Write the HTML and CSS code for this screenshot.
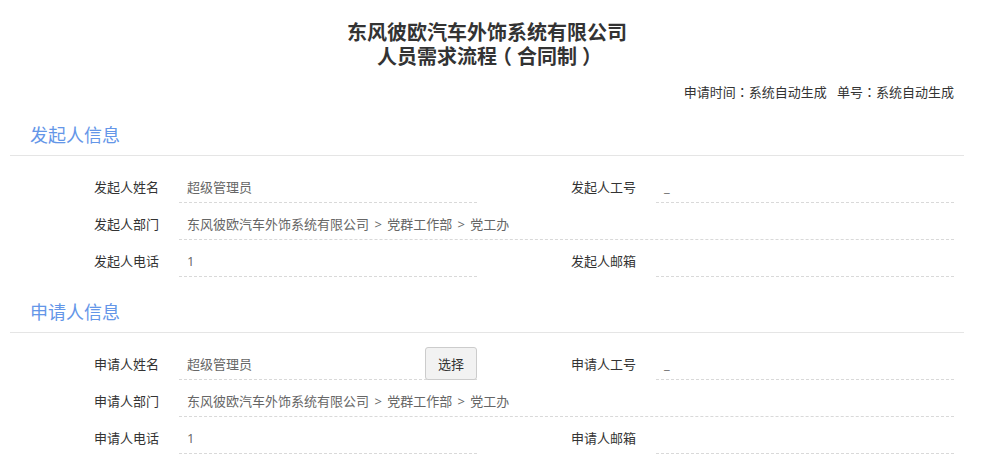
FILE: index.html
```html
<!DOCTYPE html>
<html lang="zh-CN">
<head>
  <meta charset="UTF-8">
  <meta name="viewport" content="width=device-width, initial-scale=1.0">
  <title>人员需求流程（合同制）</title>
  <link rel="stylesheet" href="styles.css">
</head>
<body>

<div class="FlowPage">
  <h1 class="FlowTitle">东风彼欧汽车外饰系统有限公司<br>人员需求流程<span class="ParenOpen">（</span>合同制<span class="ParenClose">）</span></h1>
  <div class="FlowMeta">申请时间<span class="Punct" lang="zh-TW">：</span>系统自动生成&nbsp;&nbsp;&nbsp;单号<span class="Punct" lang="zh-TW">：</span>系统自动生成</div>

  <!-- 发起人 -->
  <h2 class="SectionHead">发起人信息</h2>
  <div class="InfoGrid">
    <div class="InfoLabel">发起人姓名</div>
    <div class="InfoField"><span class="InfoValue">超级管理员</span></div>
    <div class="InfoLabel">发起人工号</div>
    <div class="InfoField"><span class="InfoValue">_</span></div>

    <div class="InfoLabel">发起人部门</div>
    <div class="InfoField wide"><span class="InfoValue">东风彼欧汽车外饰系统有限公司 &gt; 党群工作部 &gt; 党工办</span></div>

    <div class="InfoLabel">发起人电话</div>
    <div class="InfoField"><span class="InfoValue">1</span></div>
    <div class="InfoLabel">发起人邮箱</div>
    <div class="InfoField"><span class="InfoValue"></span></div>
  </div>

  <!-- 申请人 -->
  <h2 class="SectionHead">申请人信息</h2>
  <div class="InfoGrid">
    <div class="InfoLabel">申请人姓名</div>
    <div class="InfoField">
      <span class="InfoValue">超级管理员</span>
      <button type="button" class="PickBtn">选择</button>
    </div>
    <div class="InfoLabel">申请人工号</div>
    <div class="InfoField"><span class="InfoValue">_</span></div>

    <div class="InfoLabel">申请人部门</div>
    <div class="InfoField wide"><span class="InfoValue">东风彼欧汽车外饰系统有限公司 &gt; 党群工作部 &gt; 党工办</span></div>

    <div class="InfoLabel">申请人电话</div>
    <div class="InfoField"><span class="InfoValue">1</span></div>
    <div class="InfoLabel">申请人邮箱</div>
    <div class="InfoField"><span class="InfoValue"></span></div>
  </div>
</div>

</body>
</html>
```

FILE: styles.css
```css
body {
  margin: 0;
  font-family: "Open Sans", "Noto Sans CJK SC", sans-serif;
  font-size: 13px;
  color: #333;
  background-color: #fff;
}

/* centred full-width punctuation */
.Punct {
  font-family: "Noto Sans CJK TC", sans-serif;
}

.ParenOpen {
  margin-left: -5px;
  margin-right: 5px;
}

.ParenClose {
  margin-left: 5px;
  margin-right: -5px;
}

.FlowPage {
  width: 954px;
  padding-left: 10px;
}

.FlowTitle {
  margin: 21px 0 0;
  text-align: center;
  font-size: 20px;
  line-height: 24px;
  font-weight: bold;
  color: #333;
}

.FlowMeta {
  margin-top: 13px;
  padding-right: 10px;
  text-align: right;
  line-height: 20px;
}

.SectionHead {
  margin: 21px 0 0;
  padding: 0 0 8px 20px;
  font-size: 18px;
  line-height: 24px;
  font-weight: normal;
  color: #6496e8;
  border-bottom: 1px solid #e5e5e5;
}

.SectionHead + .InfoGrid {
  margin-top: 10px;
}

.InfoGrid {
  display: grid;
  grid-template-columns: 169px 298px 179px 298px;
  width: 944px;
  margin-bottom: 23px;
}

.InfoLabel {
  height: 37px;
  padding: 11px 20px 0 0;
  box-sizing: border-box;
  text-align: right;
  line-height: 20px;
  color: #333;
}

.InfoField {
  display: flex;
  align-items: flex-end;
  justify-content: space-between;
  height: 36px;
  padding-left: 8px;
  border-bottom: 1px dashed #d9d9d9;
}

.InfoField.wide {
  grid-column: 2 / 5;
}

.InfoValue {
  padding-bottom: 5px;
  line-height: 20px;
  color: #666;
  word-spacing: 2px;
}

.PickBtn {
  height: 33px;
  width: 52px;
  margin-bottom: -1px;
  padding: 0;
  font-family: inherit;
  font-size: 13px;
  color: #333;
  background-color: #f2f2f2;
  border: 1px solid #ccc;
  border-radius: 3px;
  cursor: pointer;
}
```
